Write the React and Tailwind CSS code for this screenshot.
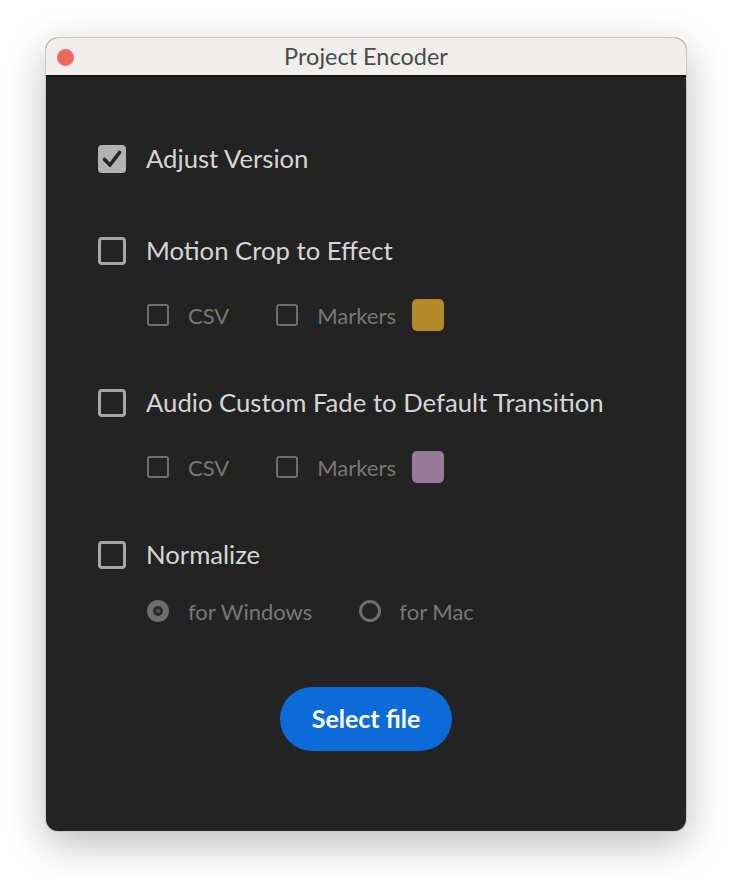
export default function App() {
  const font = { fontFamily: 'Lato, "Open Sans", sans-serif' };

  const BigBox = ({ checked }) =>
    checked ? (
      <div className="w-[28px] h-[28px] rounded-[4px] bg-[#b1b1b1] flex items-center justify-center shrink-0">
        <svg width="24" height="24" viewBox="0 0 24 24" fill="none">
          <path d="M4.5 12.5 L10 18 L19.5 5.5" stroke="#232323" strokeWidth="3.6" strokeLinecap="round" strokeLinejoin="round" />
        </svg>
      </div>
    ) : (
      <div className="w-[28px] h-[28px] rounded-[4px] border-[3px] border-[#a5a5a5] shrink-0" />
    );

  const SmallBox = () => <div className="w-[22px] h-[22px] rounded-[3px] border-[2.5px] border-[#6e6e6e] shrink-0" />;

  const Main = ({ checked, label, className = '' }) => (
    <div className={`flex items-center gap-[20px] h-[28px] ${className}`}>
      <BigBox checked={checked} />
      <span className="text-[25.7px] text-[#d6d6d6] leading-none">{label}</span>
    </div>
  );

  const Sub = ({ swatch }) => (
    <div className="flex items-center h-[32px] mt-[34px] pl-[49px]">
      <SmallBox />
      <span className="ml-[19px] text-[22px] text-[#787878]">CSV</span>
      <div className="ml-[47px]">
        <SmallBox />
      </div>
      <span className="ml-[19px] text-[22px] text-[#787878]">Markers</span>
      <div className={`ml-[16px] w-[32px] h-[32px] rounded-[5px] ${swatch}`} />
    </div>
  );

  return (
    <div className="w-[732px] h-[886px] bg-white flex justify-center pt-[38px]" style={font}>
      <div className="w-[640px] h-[793px] rounded-[12px] overflow-hidden bg-[#232323] flex flex-col shadow-[0_12px_40px_rgba(0,0,0,0.28)] ring-1 ring-[#c8c8c8]">
        <div className="h-[39px] bg-[#f0eeec] flex items-center relative shrink-0 border-b-2 border-[#101010]">
          <div className="absolute left-[11px] top-[11px] w-[17px] h-[17px] rounded-full bg-[#ee6a5e]" />
          <div className="w-full text-center text-[23.5px] text-[#4a4a4a] leading-none">Project Encoder</div>
        </div>
        <div className="flex flex-col pl-[52px] pt-[68px]">
          <Main checked label="Adjust Version" />
          <Main label="Motion Crop to Effect" className="mt-[64px]" />
          <Sub swatch="bg-[#b38a26]" />
          <Main label="Audio Custom Fade to Default Transition" className="mt-[58px]" />
          <Sub swatch="bg-[#98799b]" />
          <Main label="Normalize" className="mt-[58px]" />
          <div className="flex items-center h-[24px] mt-[30px] pl-[49px]">
            <div className="w-[22px] h-[22px] rounded-full bg-[#6e6e6e] flex items-center justify-center">
              <div className="w-[10px] h-[10px] rounded-full bg-[#2a2a2a] flex items-center justify-center">
                <div className="w-[4px] h-[4px] rounded-full bg-[#555]" />
              </div>
            </div>
            <span className="ml-[19px] text-[22px] text-[#787878]">for Windows</span>
            <div className="ml-[47px] w-[22px] h-[22px] rounded-full border-[3px] border-[#6e6e6e]" />
            <span className="ml-[18px] text-[22px] text-[#787878]">for Mac</span>
          </div>
          <div className="mt-[64px] flex justify-center pr-[52px]">
            <button className="w-[172px] h-[64px] rounded-full bg-[#0b6bd9] text-white text-[25px] font-bold">Select file</button>
          </div>
        </div>
      </div>
    </div>
  );
}
